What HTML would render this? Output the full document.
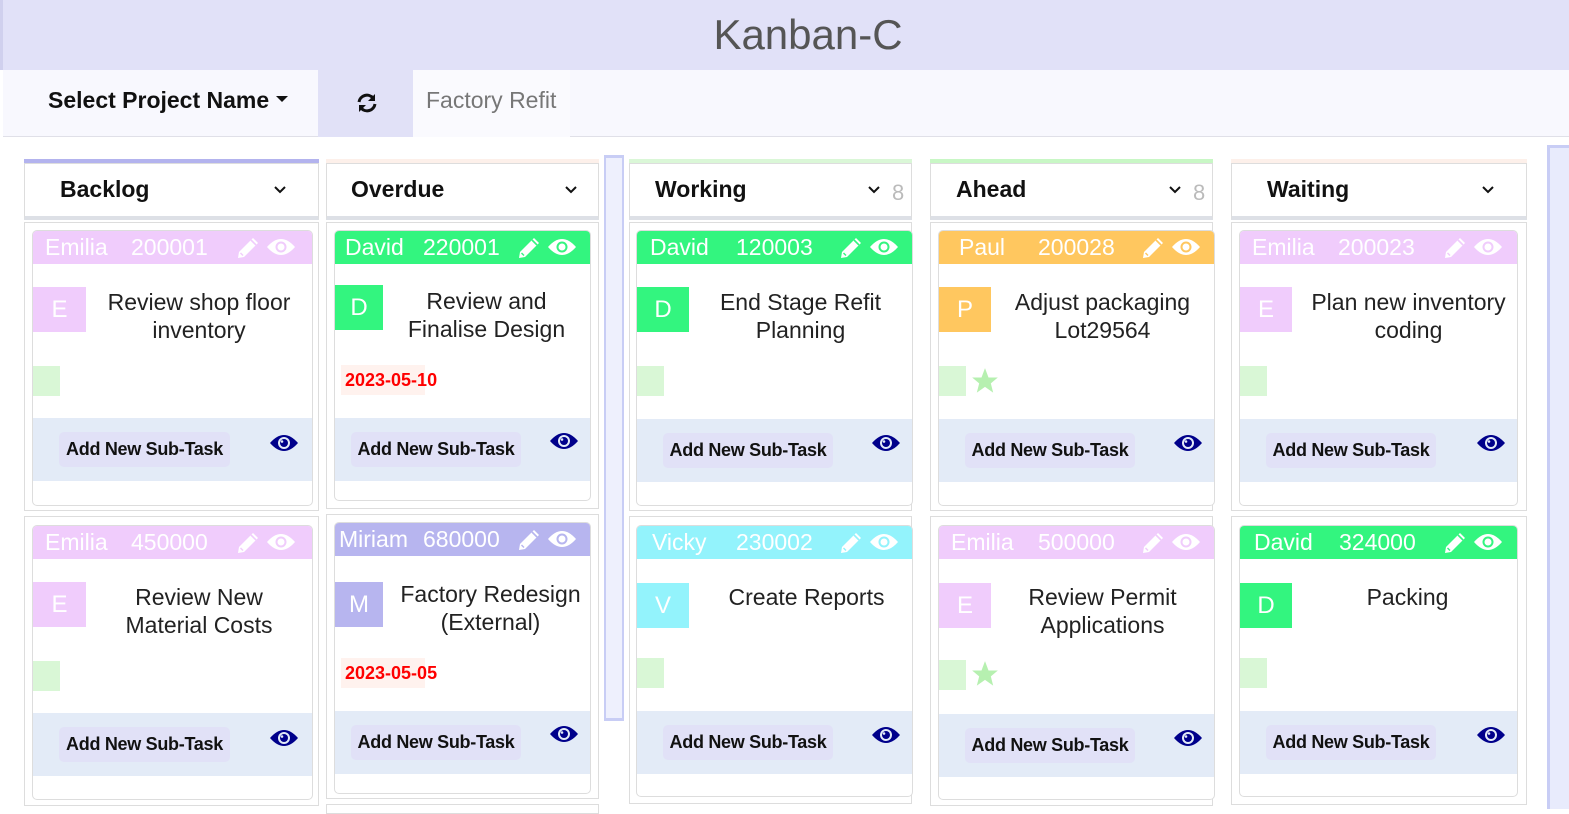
<!DOCTYPE html>
<html><head><meta charset="utf-8"><style>
*{box-sizing:border-box;margin:0;padding:0}
body{width:1569px;height:809px;overflow:hidden;background:#fff;font-family:"Liberation Sans",sans-serif;position:relative}
.a{position:absolute}
.hdr{left:0;top:0;width:1569px;height:70px;background:#e1e1f8;text-align:center;font-size:42px;line-height:70px;color:#555;border-left:3px solid #d0d0ee;padding-left:44px}
.tb{left:3px;top:70px;width:1566px;height:67px;background:#f8f8fe;border-bottom:1px solid #e0e0e8}
.colh{background:#fff;border:1px solid #ddd;border-bottom:4px solid #dde0e6;height:57px}
.colh .t{position:absolute;left:35px;top:12px;font-size:23px;font-weight:bold;color:#111}
.chev{position:absolute;top:21px}
.cnt{position:absolute;top:16px;font-size:22px;color:#bbb}
.wrap{border:1px solid #ddd}
.card{border:1px solid #ddd;border-radius:5px;background:#fff;overflow:hidden}
.ch{position:absolute;left:0;top:0;right:0;height:33px;color:#fff;font-size:23px;line-height:33px;white-space:nowrap}
.av{position:absolute;left:0;width:53px;height:45px;color:#fff;font-size:24px;text-align:center;line-height:45px}
.ti{position:absolute;text-align:center;font-size:23px;line-height:28px;color:#222;white-space:nowrap}
.gs{position:absolute;left:0;width:27px;height:30px;background:#d9f7d6}
.sub{position:absolute;left:0;right:0;height:63px;background:#e3ebf7}
.btn{position:absolute;top:14px;height:35px;width:171px;background:#e1e1f7;border-radius:5px;font-weight:bold;font-size:18px;line-height:35px;text-align:center;color:#111;white-space:nowrap;letter-spacing:-0.3px}
.date{position:absolute;left:6px;width:84px;height:30px;background:#fff2ee;color:#f00;font-weight:bold;font-size:18px;line-height:30px;padding-left:4px;white-space:nowrap;overflow:visible}
</style></head><body>
<div class="a hdr">Kanban-C</div>
<div class="a tb"></div>
<div class="a" style="left:35px;top:70px;width:283px;height:67px;font-weight:bold;font-size:23px;line-height:60px;padding-left:13px;color:#111;white-space:nowrap">Select Project Name <span style="display:inline-block;border-left:6px solid transparent;border-right:6px solid transparent;border-top:6px solid #111;vertical-align:middle;margin-top:-6px"></span></div>
<div class="a" style="left:318px;top:70px;width:95px;height:67px;background:#e1e1f7"></div>
<svg class="a" style="left:356px;top:92px" width="22" height="22" viewBox="0 0 22 22"><path d="M3 10 A8 8 0 0 1 17 6" fill="none" stroke="#111" stroke-width="3"/><path d="M19 2 L19 9 L12 9Z" fill="#111"/><path d="M19 12 A8 8 0 0 1 5 16" fill="none" stroke="#111" stroke-width="3"/><path d="M3 20 L3 13 L10 13Z" fill="#111"/></svg>
<div class="a" style="left:413px;top:70px;width:157px;height:67px;background:#fafafe;font-size:23px;line-height:60px;padding-left:13px;color:#777;white-space:nowrap">Factory Refit</div>

<div class="a" style="left:604px;top:155px;width:20px;height:566px;background:#eef0fd;border:2px solid #c8cdf5;border-top-width:3px;border-bottom-width:3px"></div>
<div class="a" style="left:1547px;top:145px;width:22px;height:664px;background:#e8ebfc;border-left:3px solid #c8cdf5;border-top:3px solid #c8cdf5"></div>

<div class="a" style="left:24px;top:159px;width:295px;height:4px;background:#b3b3ee"></div>
<div class="a colh" style="left:24px;top:163px;width:295px"><span class="t">Backlog</span><svg class="chev" style="left:248px" width="14" height="9"><path d="M2 2 L7 7 L12 2" fill="none" stroke="#111" stroke-width="2"/></svg></div>
<div class="a" style="left:326px;top:159px;width:273px;height:4px;background:#fdf0ea"></div>
<div class="a colh" style="left:326px;top:163px;width:273px"><span class="t" style="left:24px">Overdue</span><svg class="chev" style="left:237px" width="14" height="9"><path d="M2 2 L7 7 L12 2" fill="none" stroke="#111" stroke-width="2"/></svg></div>
<div class="a" style="left:629px;top:159px;width:283px;height:4px;background:#daf7d7"></div>
<div class="a colh" style="left:629px;top:163px;width:283px"><span class="t" style="left:25px">Working</span><svg class="chev" style="left:237px" width="14" height="9"><path d="M2 2 L7 7 L12 2" fill="none" stroke="#111" stroke-width="2"/></svg><span class="cnt" style="left:262px">8</span></div>
<div class="a" style="left:930px;top:159px;width:283px;height:4px;background:#c8f7c5"></div>
<div class="a colh" style="left:930px;top:163px;width:283px"><span class="t" style="left:25px">Ahead</span><svg class="chev" style="left:237px" width="14" height="9"><path d="M2 2 L7 7 L12 2" fill="none" stroke="#111" stroke-width="2"/></svg><span class="cnt" style="left:262px">8</span></div>
<div class="a" style="left:1231px;top:159px;width:296px;height:4px;background:#fdf0ea"></div>
<div class="a colh" style="left:1231px;top:163px;width:296px"><span class="t" style="left:35px">Waiting</span><svg class="chev" style="left:249px" width="14" height="9"><path d="M2 2 L7 7 L12 2" fill="none" stroke="#111" stroke-width="2"/></svg></div>

<div class="a wrap" style="left:24px;top:222px;width:295px;height:289px"></div>
<div class="a wrap" style="left:24px;top:516px;width:295px;height:290px"></div>
<div class="a wrap" style="left:326px;top:222px;width:273px;height:287px"></div>
<div class="a wrap" style="left:326px;top:514px;width:273px;height:285px"></div>
<div class="a wrap" style="left:326px;top:804px;width:273px;height:10px"></div>
<div class="a wrap" style="left:629px;top:222px;width:283px;height:289px"></div>
<div class="a wrap" style="left:629px;top:516px;width:283px;height:288px"></div>
<div class="a wrap" style="left:930px;top:222px;width:283px;height:289px"></div>
<div class="a wrap" style="left:930px;top:516px;width:283px;height:290px"></div>
<div class="a wrap" style="left:1231px;top:222px;width:296px;height:289px"></div>
<div class="a wrap" style="left:1231px;top:516px;width:296px;height:289px"></div>

<svg width="0" height="0" style="position:absolute"><defs>
<symbol id="pen" viewBox="0 0 24 24"><path d="M17 2 L22 7 L8 21 L2 22 L3 16 Z" fill="#fff"/><path d="M15 4 L20 9" stroke="currentColor" stroke-width="1.6"/><path d="M4.5 17 L7 19.5" stroke="currentColor" stroke-width="1.4"/></symbol>
<symbol id="eyew" viewBox="0 0 30 20"><path d="M1 10 Q15 -6 29 10 Q15 26 1 10Z" fill="#fff"/><circle cx="15" cy="10" r="5.5" fill="currentColor"/><circle cx="15" cy="10" r="3.5" fill="#fff"/></symbol>
<symbol id="eyeb" viewBox="0 0 30 20"><path d="M1 10 Q15 -6 29 10 Q15 26 1 10Z" fill="#00008b"/><circle cx="15" cy="10" r="6" fill="#e3ebf7"/><circle cx="15" cy="10" r="4" fill="#00008b"/><circle cx="13" cy="8.5" r="1.3" fill="#e3ebf7"/></symbol>
</defs></svg>

<div class="a card" style="left:32px;top:230px;width:281px;height:276px">
 <div class="ch" style="background:#f0ccfc"><span style="position:absolute;left:12px">Emilia</span><span style="position:absolute;left:98px">200001</span><svg style="position:absolute;left:203px;top:5px;color:#f0ccfc" width="24" height="24"><use href="#pen"/></svg><svg style="position:absolute;left:233px;top:6px;color:#f0ccfc" width="30" height="20"><use href="#eyew"/></svg></div>
 <div class="av" style="top:56px;background:#f0ccfc">E</div>
 <div class="ti" style="left:53px;right:0;top:57px">Review shop floor<br>inventory</div>
 <div class="gs" style="top:135px"></div>
 <div class="sub" style="top:187px"><div class="btn" style="left:26px">Add New Sub-Task</div><svg style="position:absolute;left:236px;top:15px" width="30" height="20"><use href="#eyeb"/></svg></div>
</div>
<div class="a card" style="left:32px;top:525px;width:281px;height:275px">
 <div class="ch" style="background:#f0ccfc"><span style="position:absolute;left:12px">Emilia</span><span style="position:absolute;left:98px">450000</span><svg style="position:absolute;left:203px;top:5px;color:#f0ccfc" width="24" height="24"><use href="#pen"/></svg><svg style="position:absolute;left:233px;top:6px;color:#f0ccfc" width="30" height="20"><use href="#eyew"/></svg></div>
 <div class="av" style="top:56px;background:#f0ccfc">E</div>
 <div class="ti" style="left:53px;right:0;top:57px">Review New<br>Material Costs</div>
 <div class="gs" style="top:135px"></div>
 <div class="sub" style="top:187px"><div class="btn" style="left:26px">Add New Sub-Task</div><svg style="position:absolute;left:236px;top:15px" width="30" height="20"><use href="#eyeb"/></svg></div>
</div>
<div class="a card" style="left:334px;top:230px;width:257px;height:271px">
 <div class="ch" style="background:#33f57f"><span style="position:absolute;left:10px">David</span><span style="position:absolute;left:88px">220001</span><svg style="position:absolute;left:182px;top:5px;color:#33f57f" width="24" height="24"><use href="#pen"/></svg><svg style="position:absolute;left:212px;top:6px;color:#33f57f" width="30" height="20"><use href="#eyew"/></svg></div>
 <div class="av" style="top:54px;width:48px;background:#33f57f">D</div>
 <div class="ti" style="left:48px;right:0;top:56px">Review and<br>Finalise Design</div>
 <div class="date" style="top:134px">2023-05-10</div>
 <div class="sub" style="top:187px"><div class="btn" style="left:16px;width:170px">Add New Sub-Task</div><svg style="position:absolute;left:214px;top:13px" width="30" height="20"><use href="#eyeb"/></svg></div>
</div>
<div class="a card" style="left:334px;top:522px;width:257px;height:272px">
 <div class="ch" style="background:#b7b5ef"><span style="position:absolute;left:4px">Miriam</span><span style="position:absolute;left:88px">680000</span><svg style="position:absolute;left:182px;top:5px;color:#b7b5ef" width="24" height="24"><use href="#pen"/></svg><svg style="position:absolute;left:212px;top:6px;color:#b7b5ef" width="30" height="20"><use href="#eyew"/></svg></div>
 <div class="av" style="top:59px;width:48px;background:#b7b5ef">M</div>
 <div class="ti" style="left:56px;right:0;top:57px">Factory Redesign<br>(External)</div>
 <div class="date" style="top:135px">2023-05-05</div>
 <div class="sub" style="top:188px"><div class="btn" style="left:16px;width:170px">Add New Sub-Task</div><svg style="position:absolute;left:214px;top:13px" width="30" height="20"><use href="#eyeb"/></svg></div>
</div>
<div class="a card" style="left:636px;top:230px;width:277px;height:276px">
 <div class="ch" style="background:#33f57f"><span style="position:absolute;left:13px">David</span><span style="position:absolute;left:99px">120003</span><svg style="position:absolute;left:202px;top:5px;color:#33f57f" width="24" height="24"><use href="#pen"/></svg><svg style="position:absolute;left:232px;top:6px;color:#33f57f" width="30" height="20"><use href="#eyew"/></svg></div>
 <div class="av" style="top:56px;width:52px;background:#33f57f">D</div>
 <div class="ti" style="left:52px;right:0;top:57px">End Stage Refit<br>Planning</div>
 <div class="gs" style="top:135px"></div>
 <div class="sub" style="top:188px"><div class="btn" style="left:26px;width:170px">Add New Sub-Task</div><svg style="position:absolute;left:234px;top:14px" width="30" height="20"><use href="#eyeb"/></svg></div>
</div>
<div class="a card" style="left:636px;top:525px;width:277px;height:272px">
 <div class="ch" style="background:#93f3fc"><span style="position:absolute;left:15px">Vicky</span><span style="position:absolute;left:99px">230002</span><svg style="position:absolute;left:202px;top:5px;color:#93f3fc" width="24" height="24"><use href="#pen"/></svg><svg style="position:absolute;left:232px;top:6px;color:#93f3fc" width="30" height="20"><use href="#eyew"/></svg></div>
 <div class="av" style="top:57px;width:52px;background:#93f3fc">V</div>
 <div class="ti" style="left:64px;right:0;top:57px">Create Reports</div>
 <div class="gs" style="top:132px"></div>
 <div class="sub" style="top:185px"><div class="btn" style="left:26px;width:170px">Add New Sub-Task</div><svg style="position:absolute;left:234px;top:14px" width="30" height="20"><use href="#eyeb"/></svg></div>
</div>
<div class="a card" style="left:938px;top:230px;width:277px;height:276px">
 <div class="ch" style="background:#ffc75f"><span style="position:absolute;left:20px">Paul</span><span style="position:absolute;left:99px">200028</span><svg style="position:absolute;left:202px;top:5px;color:#ffc75f" width="24" height="24"><use href="#pen"/></svg><svg style="position:absolute;left:232px;top:6px;color:#ffc75f" width="30" height="20"><use href="#eyew"/></svg></div>
 <div class="av" style="top:56px;width:52px;background:#ffc75f">P</div>
 <div class="ti" style="left:52px;right:0;top:57px">Adjust packaging<br>Lot29564</div>
 <div class="gs" style="top:135px"></div>
 <svg style="position:absolute;left:32px;top:136px" width="28" height="28" viewBox="0 0 24 24"><path d="M12 1 L15 9 L23 9 L17 14 L19 22 L12 17 L5 22 L7 14 L1 9 L9 9Z" fill="#b6f0b0"/></svg>
 <div class="sub" style="top:188px"><div class="btn" style="left:26px;width:170px">Add New Sub-Task</div><svg style="position:absolute;left:234px;top:14px" width="30" height="20"><use href="#eyeb"/></svg></div>
</div>
<div class="a card" style="left:938px;top:525px;width:277px;height:275px">
 <div class="ch" style="background:#f0ccfc"><span style="position:absolute;left:12px">Emilia</span><span style="position:absolute;left:99px">500000</span><svg style="position:absolute;left:202px;top:5px;color:#f0ccfc" width="24" height="24"><use href="#pen"/></svg><svg style="position:absolute;left:232px;top:6px;color:#f0ccfc" width="30" height="20"><use href="#eyew"/></svg></div>
 <div class="av" style="top:57px;width:52px;background:#f0ccfc">E</div>
 <div class="ti" style="left:52px;right:0;top:57px">Review Permit<br>Applications</div>
 <div class="gs" style="top:134px"></div>
 <svg style="position:absolute;left:32px;top:134px" width="28" height="28" viewBox="0 0 24 24"><path d="M12 1 L15 9 L23 9 L17 14 L19 22 L12 17 L5 22 L7 14 L1 9 L9 9Z" fill="#b6f0b0"/></svg>
 <div class="sub" style="top:188px"><div class="btn" style="left:26px;width:170px">Add New Sub-Task</div><svg style="position:absolute;left:234px;top:14px" width="30" height="20"><use href="#eyeb"/></svg></div>
</div>
<div class="a card" style="left:1239px;top:230px;width:279px;height:276px">
 <div class="ch" style="background:#f0ccfc"><span style="position:absolute;left:12px">Emilia</span><span style="position:absolute;left:98px">200023</span><svg style="position:absolute;left:203px;top:5px;color:#f0ccfc" width="24" height="24"><use href="#pen"/></svg><svg style="position:absolute;left:233px;top:6px;color:#f0ccfc" width="30" height="20"><use href="#eyew"/></svg></div>
 <div class="av" style="top:56px;width:52px;background:#f0ccfc">E</div>
 <div class="ti" style="left:60px;right:0;top:57px">Plan new inventory<br>coding</div>
 <div class="gs" style="top:135px"></div>
 <div class="sub" style="top:188px"><div class="btn" style="left:26px;width:170px">Add New Sub-Task</div><svg style="position:absolute;left:236px;top:14px" width="30" height="20"><use href="#eyeb"/></svg></div>
</div>
<div class="a card" style="left:1239px;top:525px;width:279px;height:272px">
 <div class="ch" style="background:#33f57f"><span style="position:absolute;left:14px">David</span><span style="position:absolute;left:99px">324000</span><svg style="position:absolute;left:203px;top:5px;color:#33f57f" width="24" height="24"><use href="#pen"/></svg><svg style="position:absolute;left:233px;top:6px;color:#33f57f" width="30" height="20"><use href="#eyew"/></svg></div>
 <div class="av" style="top:57px;width:52px;background:#33f57f">D</div>
 <div class="ti" style="left:58px;right:0;top:57px">Packing</div>
 <div class="gs" style="top:132px"></div>
 <div class="sub" style="top:185px"><div class="btn" style="left:26px;width:170px">Add New Sub-Task</div><svg style="position:absolute;left:236px;top:14px" width="30" height="20"><use href="#eyeb"/></svg></div>
</div>
</body></html>
